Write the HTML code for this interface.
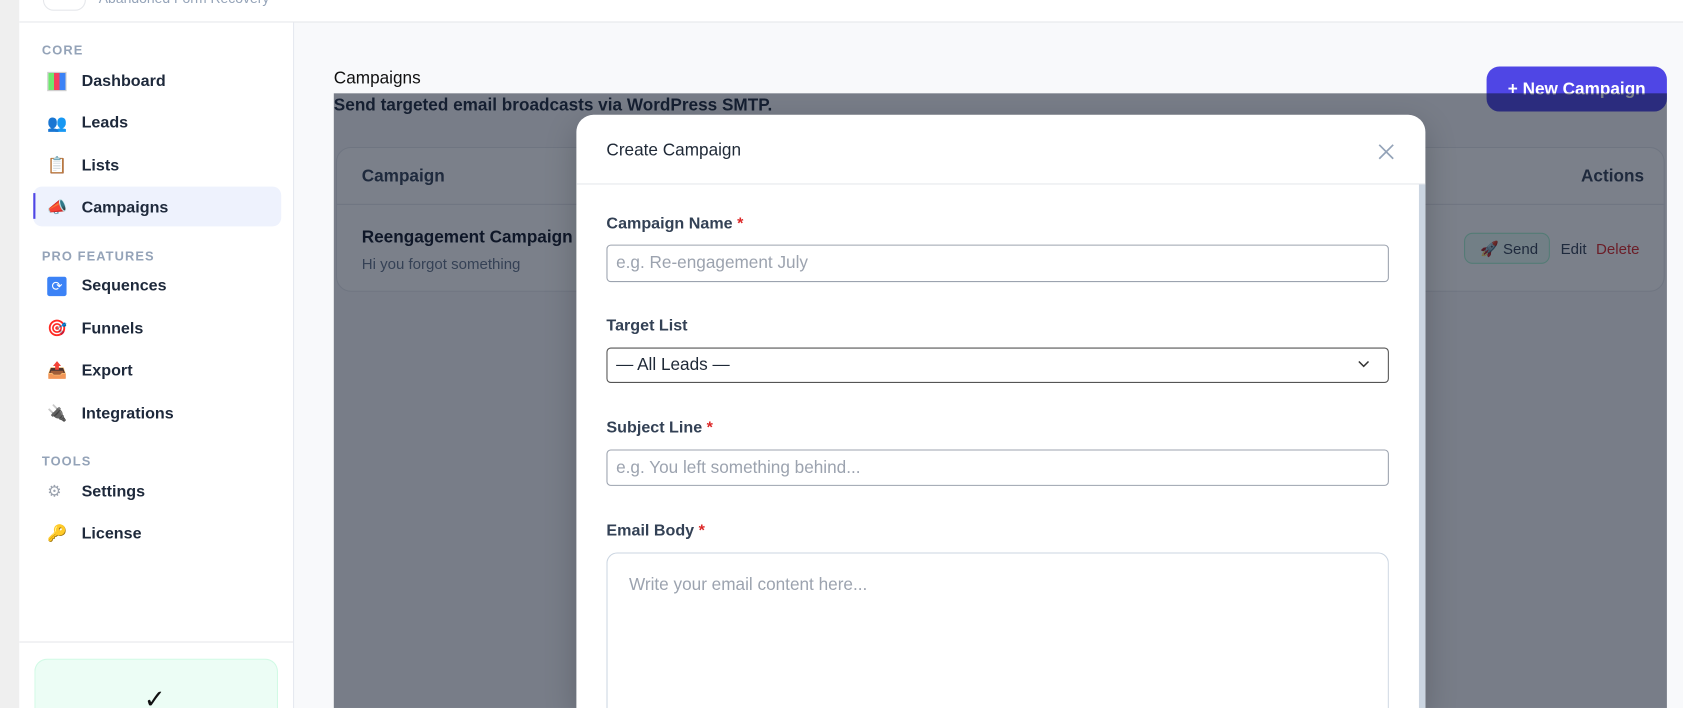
<!DOCTYPE html>
<html><head><meta charset="utf-8"><style>
*{box-sizing:border-box;margin:0;padding:0}
html,body{width:1683px;height:708px;overflow:hidden;background:#f8f9fb}
#s{position:absolute;left:0;top:0;width:1568px;height:660px;transform:scale(1.07334,1.0727);transform-origin:0 0;font-family:"Liberation Sans",sans-serif;background:#f8f9fb;overflow:hidden}
.a{position:absolute}
.strip{left:0;top:0;width:18px;height:660px;background:#efefef}
.top{left:18px;top:0;width:1550px;height:21px;background:#fff;border-bottom:1px solid #e5e7eb}
.side{left:18px;top:21px;width:256px;height:639px;background:#fff;border-right:1px solid #e5e9f0}
.sec{left:39px;font-size:12px;font-weight:bold;letter-spacing:1px;color:#94a3b8}
.it{left:76px;font-size:15px;font-weight:bold;color:#1e293b}
.ic{left:44px;width:18px;height:18px;font-size:15px;line-height:18px}
.inp{left:565px;width:729px;border:1px solid #9ca3af;border-radius:4px;font-size:16px;color:#9ca3af;padding-left:8px}
.lbl{left:565px;font-size:15px;font-weight:bold;color:#334155}
.lbl span{color:#dc2626}
</style></head><body><div id="s">
<div class="a strip"></div>
<div class="a top"></div>
<div class="a" style="left:40px;top:-10px;width:40px;height:20px;border:1px solid #e5e7eb;border-radius:10px;background:#fff"></div>
<div class="a" style="left:92px;top:-9px;font-size:13px;color:#94a3b8">Abandoned Form Recovery</div>
<div class="a side"></div>
<div class="a" style="left:18px;top:598px;width:255px;height:1px;background:#e5e7eb"></div>
<div class="a" style="left:32px;top:614px;width:227px;height:46px;background:#ecfdf5;border:1px solid #d1fae5;border-bottom:none;border-radius:12px 12px 0 0"></div>
<div class="a" style="left:134px;top:638px;font-size:24px;color:#111">✓</div>
<div class="a sec" style="top:40px">CORE</div>
<div class="a sec" style="top:232px">PRO FEATURES</div>
<div class="a sec" style="top:423px">TOOLS</div>
<div class="a" style="left:31px;top:174px;width:231px;height:37px;background:#eef2fd;border-radius:8px"></div>
<div class="a" style="left:31px;top:180px;width:2px;height:24px;background:#4f46e5"></div>
<div class="a ic" style="top:67px;background:linear-gradient(90deg,#6ee76e 0 33%,#f43f5e 33% 66%,#3b82f6 66%);border:1px solid #ccc"></div>
<div class="a it" style="top:67px">Dashboard</div>
<div class="a ic" style="top:107px;color:#4c3b8a">👥</div><div class="a it" style="top:106px">Leads</div>
<div class="a ic" style="top:146px">📋</div><div class="a it" style="top:146px">Lists</div>
<div class="a ic" style="top:185px">📣</div><div class="a it" style="top:185px">Campaigns</div>
<div class="a ic" style="top:258px;background:#3b82f6;color:#fff;font-size:12px;text-align:center;border-radius:2px">⟳</div><div class="a it" style="top:258px">Sequences</div>
<div class="a ic" style="top:298px">🎯</div><div class="a it" style="top:298px">Funnels</div>
<div class="a ic" style="top:337px">📤</div><div class="a it" style="top:337px">Export</div>
<div class="a ic" style="top:377px">🔌</div><div class="a it" style="top:377px">Integrations</div>
<div class="a ic" style="top:450px;color:#9ca3af">⚙</div><div class="a it" style="top:450px">Settings</div>
<div class="a ic" style="top:489px">🔑</div><div class="a it" style="top:489px">License</div>

<div class="a" style="left:311px;top:65px;font-size:16px;color:#111">Campaigns</div>
<div class="a" style="left:311px;top:90px;font-size:16px;font-weight:bold;color:#1e293b">Send targeted email broadcasts via WordPress SMTP.</div>
<div class="a" style="left:1385px;top:62px;width:168px;height:42px;background:#4f46e5;border-radius:12px;color:#fff;font-weight:bold;font-size:16px;text-align:center;line-height:44px">+ New Campaign</div>
<div class="a" style="left:313px;top:137px;width:1238px;height:135px;background:#fff;border:1px solid #e5e7eb;border-radius:14px"></div>
<div class="a" style="left:313px;top:190px;width:1238px;height:1px;background:#e5e7eb"></div>
<div class="a" style="left:337px;top:156px;font-size:16px;font-weight:bold;color:#334155">Campaign</div>
<div class="a" style="left:1473px;top:156px;font-size:16px;font-weight:bold;color:#334155">Actions</div>
<div class="a" style="left:337px;top:213px;font-size:16px;font-weight:bold;color:#111827">Reengagement Campaign</div>
<div class="a" style="left:337px;top:238px;font-size:14px;color:#64748b">Hi you forgot something</div>
<div class="a" style="left:1364px;top:217px;width:80px;height:29px;border:1px solid #a7f3d0;background:#ecfdf5;border-radius:8px;font-size:14px;color:#334155;line-height:28px;padding-left:14px">🚀 Send</div>
<div class="a" style="left:1454px;top:224px;font-size:14px;color:#334155">Edit</div>
<div class="a" style="left:1487px;top:224px;font-size:14px;color:#dc2626">Delete</div>

<div class="a" style="left:311px;top:87px;width:1242px;height:573px;background:rgba(15,23,42,0.55)"></div>

<div class="a" style="left:537px;top:107px;width:791px;height:553px;background:#fff;border-radius:16px 16px 0 0;box-shadow:0 10px 30px rgba(0,0,0,.2)"></div>
<div class="a" style="left:537px;top:171px;width:791px;height:1px;background:#e5e7eb"></div>
<div class="a" style="left:1322px;top:172px;width:6px;height:488px;background:#cbd5e1"></div>
<div class="a" style="left:565px;top:132px;font-size:16px;color:#1f2937">Create Campaign</div>
<svg class="a" style="left:1284px;top:134px" width="15" height="15" viewBox="0 0 15 15"><path d="M1 1L14 14M14 1L1 14" stroke="#94a3b8" stroke-width="1.6"/></svg>
<div class="a lbl" style="top:200px">Campaign Name <span>*</span></div>
<div class="a inp" style="top:228px;height:35px;line-height:34px">e.g. Re-engagement July</div>
<div class="a lbl" style="top:295px">Target List</div>
<div class="a inp" style="top:324px;height:33px;line-height:32px;border:1px solid #555;color:#1f2937">— All Leads —</div>
<svg class="a" style="left:1265px;top:336px" width="11" height="7" viewBox="0 0 11 7"><path d="M1 1l4.5 4.5L10 1" stroke="#333" fill="none" stroke-width="1.4"/></svg>
<div class="a lbl" style="top:390px">Subject Line <span>*</span></div>
<div class="a inp" style="top:419px;height:34px;line-height:33px">e.g. You left something behind...</div>
<div class="a lbl" style="top:486px">Email Body <span>*</span></div>
<div class="a inp" style="top:515px;height:145px;border:1px solid #cbd5e1;border-bottom:none;border-radius:10px 10px 0 0;padding:21px 20px">Write your email content here...</div>
</div></body></html>
